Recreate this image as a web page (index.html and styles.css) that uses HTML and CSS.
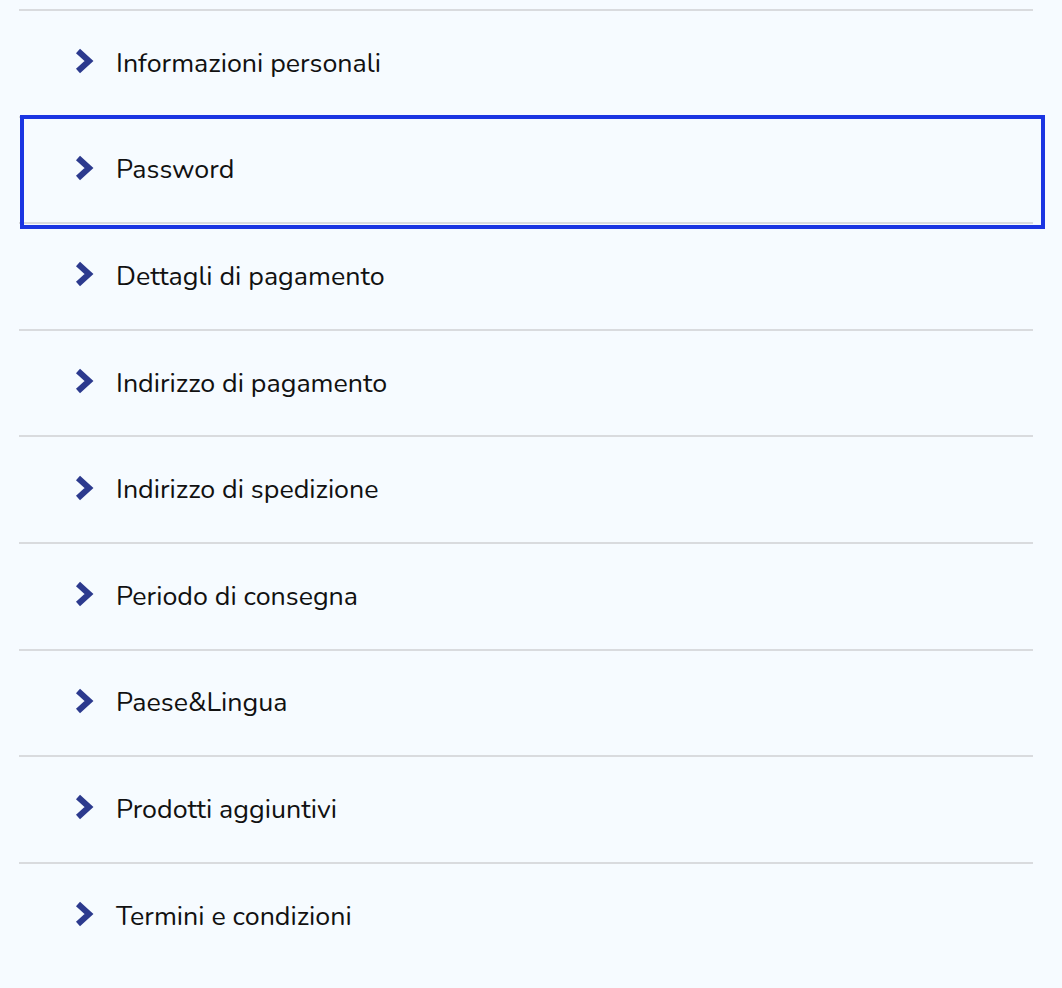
FILE: index.html
```html
<!DOCTYPE html>
<html lang="it">
<head>
<meta charset="utf-8">
<title>Account</title>
<link rel="stylesheet" href="styles.css">
</head>
<body>
<ul class="menu">
  <li class="item"><svg class="chev" viewBox="0 0 20 25"><path d="M3 2.5 L14 12.5 L3 22.5"/></svg><span class="label">Informazioni personali</span></li>
  <li class="item focused"><svg class="chev" viewBox="0 0 20 25"><path d="M3 2.5 L14 12.5 L3 22.5"/></svg><span class="label">Password</span></li>
  <li class="item"><svg class="chev" viewBox="0 0 20 25"><path d="M3 2.5 L14 12.5 L3 22.5"/></svg><span class="label">Dettagli di pagamento</span></li>
  <li class="item"><svg class="chev" viewBox="0 0 20 25"><path d="M3 2.5 L14 12.5 L3 22.5"/></svg><span class="label">Indirizzo di pagamento</span></li>
  <li class="item"><svg class="chev" viewBox="0 0 20 25"><path d="M3 2.5 L14 12.5 L3 22.5"/></svg><span class="label">Indirizzo di spedizione</span></li>
  <li class="item"><svg class="chev" viewBox="0 0 20 25"><path d="M3 2.5 L14 12.5 L3 22.5"/></svg><span class="label">Periodo di consegna</span></li>
  <li class="item"><svg class="chev" viewBox="0 0 20 25"><path d="M3 2.5 L14 12.5 L3 22.5"/></svg><span class="label">Paese&amp;Lingua</span></li>
  <li class="item"><svg class="chev" viewBox="0 0 20 25"><path d="M3 2.5 L14 12.5 L3 22.5"/></svg><span class="label">Prodotti aggiuntivi</span></li>
  <li class="item last"><svg class="chev" viewBox="0 0 20 25"><path d="M3 2.5 L14 12.5 L3 22.5"/></svg><span class="label">Termini e condizioni</span></li>
</ul>
</body>
</html>
```
FILE: styles.css
```css
html, body {
  margin: 0;
  padding: 0;
  background: #f6fbff;
}
body {
  font-family: "Nunito", "Lato", "Open Sans", sans-serif;
  color: #111111;
  overflow: hidden;
  height: 988px;
}
.menu {
  list-style: none;
  margin: 9px 0 0 19px;
  padding: 0;
  width: 1014px;
  border-top: 2px solid #d9dbde;
}
.item {
  position: relative;
  display: flex;
  align-items: center;
  height: 104.6px;
  border-bottom: 2px solid #d9dbde;
  padding-left: 56px;
  box-sizing: content-box;
}
.item.last {
  border-bottom: none;
}
.chev {
  width: 20px;
  height: 26px;
  flex: none;
  margin-bottom: 4px;
  fill: none;
  stroke: #2c3a8e;
  stroke-width: 6;
  stroke-linecap: butt;
  stroke-linejoin: miter;
}
.label {
  margin-left: 21px;
  font-size: 26.8px;
  padding-bottom: 1px;
}
.focused::after {
  content: "";
  position: absolute;
  top: -3px;
  left: 1px;
  right: -12px;
  bottom: -7px;
  border: 4px solid #1a35e2;
  pointer-events: none;
}
```
